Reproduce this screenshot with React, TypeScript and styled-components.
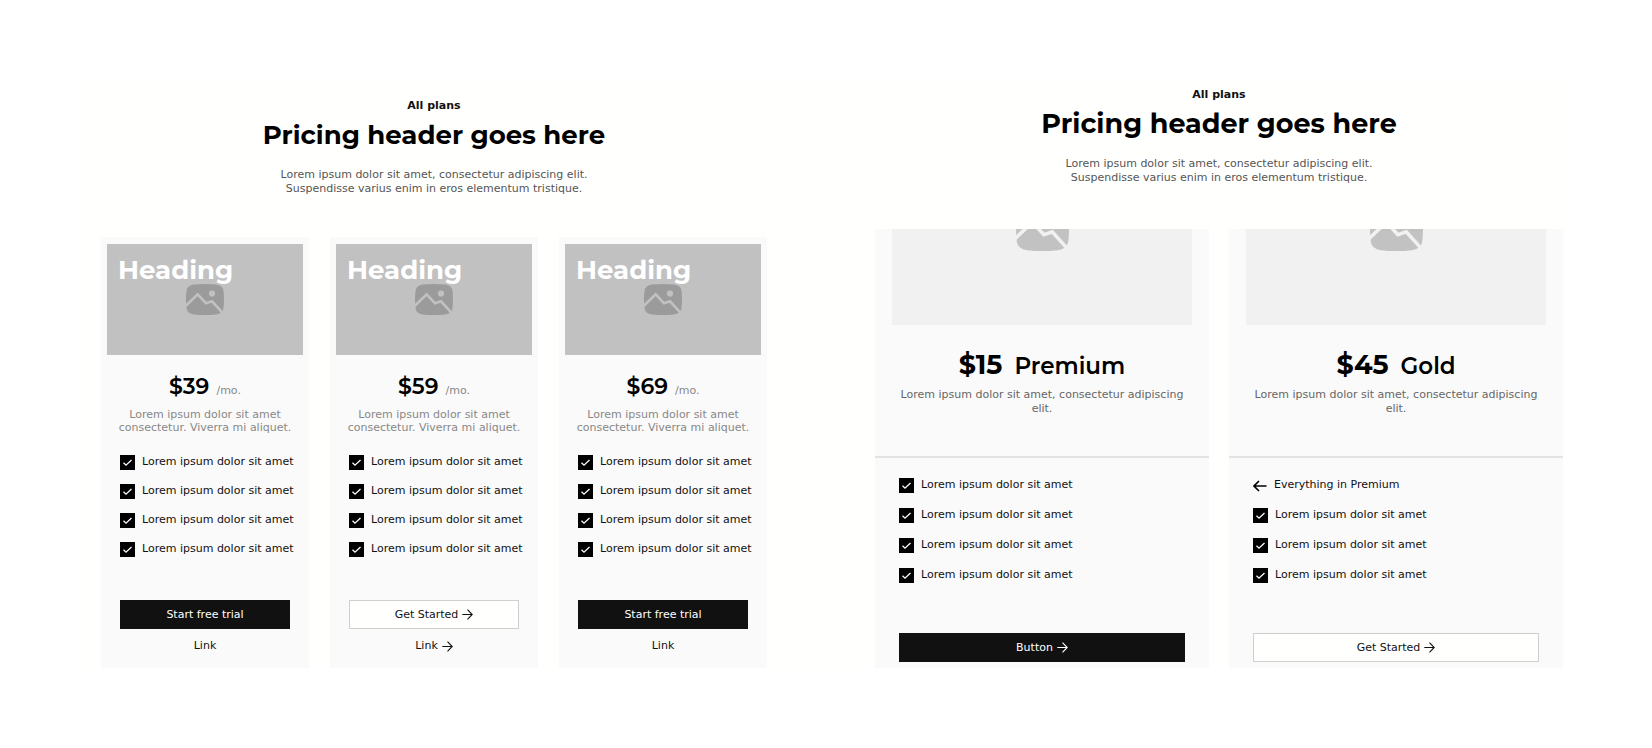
import React from "react";
import styled, { createGlobalStyle } from "styled-components";

const GlobalStyle = createGlobalStyle`
  *, *::before, *::after { box-sizing: border-box; }
  body {
    margin: 0;
    background: #fff;
    color: #111;
    font: 11px/14px "DejaVu Sans", sans-serif;
  }
  h1, h2, h3, p, ul { margin: 0; padding: 0; }
`;

const display = `font-family: Montserrat, Inter, sans-serif;`;

const Page = styled.main`
  display: grid;
  grid-template-columns: minmax(0, 666fr) minmax(0, 688fr);
  gap: 108px;
  margin: 80px;
  padding: 0 9px 0 21px;
  background: #fffffd;
`;

const Section = styled.section<{ $top: number }>`
  display: flex;
  flex-direction: column;
  padding-top: ${(p) => p.$top}px;
`;

const Header = styled.header<{ $space: number }>`
  text-align: center;
  margin-bottom: ${(p) => p.$space}px;
`;

const Eyebrow = styled.p`
  font-weight: 700;
`;

const Title = styled.h1<{ $size: number }>`
  ${display}
  color: #000;
  font-size: ${(p) => p.$size}px;
  line-height: 34px;
  font-weight: 700;
  margin: 5px 0 16px;
`;

const Intro = styled.p`
  color: #555;
`;

const Cards = styled.div<{ $columns: number }>`
  flex: 1;
  display: grid;
  grid-template-columns: repeat(${(p) => p.$columns}, minmax(0, 1fr));
  gap: ${(p) => (p.$columns === 3 ? 21 : 20)}px;
`;

const Card = styled.article`
  display: flex;
  flex-direction: column;
  background: #fafafa;
`;

const Cover = styled.div`
  display: grid;
  height: 111px;
  margin: 7px 6px 0;
  background: #c1c1c1;
  & > * { grid-area: 1 / 1; }
  & > svg { place-self: center; }
`;

const CoverTitle = styled.h2`
  ${display}
  color: #fff;
  font-size: 26px;
  line-height: 32px;
  font-weight: 700;
  padding: 10px 11px;
  z-index: 1;
`;

const CroppedCover = styled.div`
  display: flex;
  justify-content: center;
  align-items: flex-start;
  height: 96px;
  margin: 0 17px;
  background: #f1f1f1;
`;

const PriceRow = styled.h3<{ $gap: number; $top: number }>`
  ${display}
  display: flex;
  justify-content: center;
  align-items: baseline;
  gap: ${(p) => p.$gap}px;
  margin-top: ${(p) => p.$top}px;
  color: #000;
  line-height: 32px;
`;

const Price = styled.span<{ $large?: boolean }>`
  font-size: ${(p) => (p.$large ? 27 : 22)}px;
  font-weight: ${(p) => (p.$large ? 700 : 600)};
`;

const Period = styled.span`
  font: 11px "DejaVu Sans", sans-serif;
  color: #888;
`;

const PlanName = styled.span`
  font-size: 23px;
  font-weight: 600;
`;

const Summary = styled.p<{ $muted?: boolean }>`
  text-align: center;
  white-space: nowrap;
  color: ${(p) => (p.$muted ? "#888" : "#666")};
  line-height: ${(p) => (p.$muted ? 13 : 14)}px;
  margin-top: ${(p) => (p.$muted ? 5 : 6)}px;
`;

const Divider = styled.hr`
  width: 100%;
  height: 2px;
  margin: 40px 0 0;
  border: 0;
  background: #e2e2e2;
`;

const Features = styled.ul<{ $gap: number; $top: number; $side: number }>`
  list-style: none;
  display: flex;
  flex-direction: column;
  gap: ${(p) => p.$gap}px;
  margin: ${(p) => p.$top}px ${(p) => p.$side}px 0;
`;

const Feature = styled.label`
  display: flex;
  align-items: flex-end;
  gap: 7px;
  height: 15px;
  white-space: nowrap;
`;

const FeatureText = styled.span`
  line-height: 14px;
  align-self: flex-start;
`;

const Tick = styled.span`
  display: grid;
  width: 15px;
  height: 15px;
  flex: none;
  & > * { grid-area: 1 / 1; }
  & > svg { pointer-events: none; }
`;

const TickInput = styled.input`
  appearance: none;
  width: 15px;
  height: 15px;
  margin: 0;
  background: #000;
`;

const Actions = styled.div<{ $top: number; $side: number }>`
  display: flex;
  flex-direction: column;
  align-items: center;
  gap: 10px;
  padding: ${(p) => p.$top}px ${(p) => p.$side}px 0;
`;

const Button = styled.button<{ $outline?: boolean }>`
  display: flex;
  justify-content: center;
  align-items: center;
  gap: 4px;
  width: 100%;
  height: 29px;
  padding: 0;
  font: inherit;
  color: ${(p) => (p.$outline ? "#111" : "#fff")};
  background: ${(p) => (p.$outline ? "#fffffe" : "#111")};
  border: 1px solid ${(p) => (p.$outline ? "#cfcfcf" : "#111")};
`;

const TextLink = styled.a`
  display: flex;
  align-items: center;
  gap: 4px;
  margin-bottom: 15px;
  color: #111;
  text-decoration: none;
`;

function Arrow() {
  return (
    <svg width="11" height="11" viewBox="0 0 11 11" fill="none" stroke="currentColor" strokeWidth="1.1" aria-hidden="true">
      <path d="M0.300 5.500H10M5.500 0.600L10.200 5.500L5.500 10.400" />
    </svg>
  );
}

function BackArrow() {
  return (
    <svg width="14" height="13" viewBox="0 0 14 13" fill="none" stroke="#000" strokeWidth="1.6" aria-hidden="true">
      <path d="M13.500 6H1M6 1L1 6L6 11" />
    </svg>
  );
}

function Picture({ width, height, color, gap }: { width: number; height: number; color: string; gap: string }) {
  return (
    <svg width={width} height={height} viewBox="0 0 38 31" preserveAspectRatio="xMidYMax slice" aria-hidden="true">
      <path
        fill={color}
        d="M8 .6Q19-.6 30 .6Q36.800 1.200 37.500 7Q38.500 15.500 37.500 24Q36.800 29.700 30 30.400Q19 31.600 8 30.400Q1.200 29.700.5 24Q-.5 15.500.5 7Q1.200 1.200 8 .6Z"
      />
      <path d="M-2 23.500L11.700 10.300L20 19.300L26 17.300L37.500 30" fill="none" stroke={gap} strokeWidth="2.600" />
      <circle cx="26" cy="9.500" r="3.100" fill={gap} />
    </svg>
  );
}

function Check({ text }: { text: string }) {
  return (
    <li>
      <Feature>
        <Tick>
          <TickInput type="checkbox" defaultChecked />
          <svg width="15" height="15" viewBox="0 0 15 15" fill="none" stroke="#fff" strokeWidth="1.300" aria-hidden="true">
            <path d="M3.500 7.800L6 10.200L11.500 5" />
          </svg>
        </Tick>
        <FeatureText>{text}</FeatureText>
      </Feature>
    </li>
  );
}

const LOREM = "Lorem ipsum dolor sit amet";

const monthly = [
  { price: "$39", action: "Start free trial", outline: false },
  { price: "$59", action: "Get Started", outline: true },
  { price: "$69", action: "Start free trial", outline: false },
];

const tiers = [
  { price: "$15", name: "Premium", action: "Button", outline: false, inherits: "" },
  { price: "$45", name: "Gold", action: "Get Started", outline: true, inherits: "Everything in Premium" },
];

function SectionHeader({ size, space }: { size: number; space: number }) {
  return (
    <Header $space={space}>
      <Eyebrow>All plans</Eyebrow>
      <Title $size={size}>Pricing header goes here</Title>
      <Intro>
        Lorem ipsum dolor sit amet, consectetur adipiscing elit.
        <br />
        Suspendisse varius enim in eros elementum tristique.
      </Intro>
    </Header>
  );
}

export default function App() {
  return (
    <>
      <GlobalStyle />
      <Page>
        <Section $top={19}>
          <SectionHeader size={26} space={41} />
          <Cards $columns={3}>
            {monthly.map((plan) => (
              <Card key={plan.price}>
                <Cover>
                  <CoverTitle>Heading</CoverTitle>
                  <Picture width={38} height={31} color="#9b9b9b" gap="#c1c1c1" />
                </Cover>
                <PriceRow $gap={7} $top={16}>
                  <Price>{plan.price}</Price>
                  <Period>/mo.</Period>
                </PriceRow>
                <Summary $muted>
                  Lorem ipsum dolor sit amet
                  <br />
                  consectetur. Viverra mi aliquet.
                </Summary>
                <Features $gap={14} $top={21} $side={19}>
                  {[1, 2, 3, 4].map((n) => (
                    <Check key={n} text={LOREM} />
                  ))}
                </Features>
                <Actions $top={43} $side={19}>
                  <Button type="button" $outline={plan.outline}>
                    {plan.action}
                    {plan.outline && <Arrow />}
                  </Button>
                  <TextLink href="#">
                    Link
                    {plan.outline && <Arrow />}
                  </TextLink>
                </Actions>
              </Card>
            ))}
          </Cards>
        </Section>
        <Section $top={8}>
          <SectionHeader size={27} space={44} />
          <Cards $columns={2}>
            {tiers.map((tier) => (
              <Card key={tier.name}>
                <CroppedCover>
                  <Picture width={53} height={22} color="#c2c2c2" gap="#f1f1f1" />
                </CroppedCover>
                <PriceRow $gap={12} $top={24}>
                  <Price $large>{tier.price}</Price>
                  <PlanName>{tier.name}</PlanName>
                </PriceRow>
                <Summary>
                  Lorem ipsum dolor sit amet, consectetur adipiscing
                  <br />
                  elit.
                </Summary>
                <Divider />
                <Features $gap={15} $top={20} $side={24}>
                  {tier.inherits && (
                    <li>
                      <Feature as="div">
                        <BackArrow />
                        <FeatureText>{tier.inherits}</FeatureText>
                      </Feature>
                    </li>
                  )}
                  {(tier.inherits ? [1, 2, 3] : [1, 2, 3, 4]).map((n) => (
                    <Check key={n} text={LOREM} />
                  ))}
                </Features>
                <Actions $top={50} $side={24}>
                  <Button type="button" $outline={tier.outline}>
                    {tier.action}
                    <Arrow />
                  </Button>
                </Actions>
              </Card>
            ))}
          </Cards>
        </Section>
      </Page>
    </>
  );
}
